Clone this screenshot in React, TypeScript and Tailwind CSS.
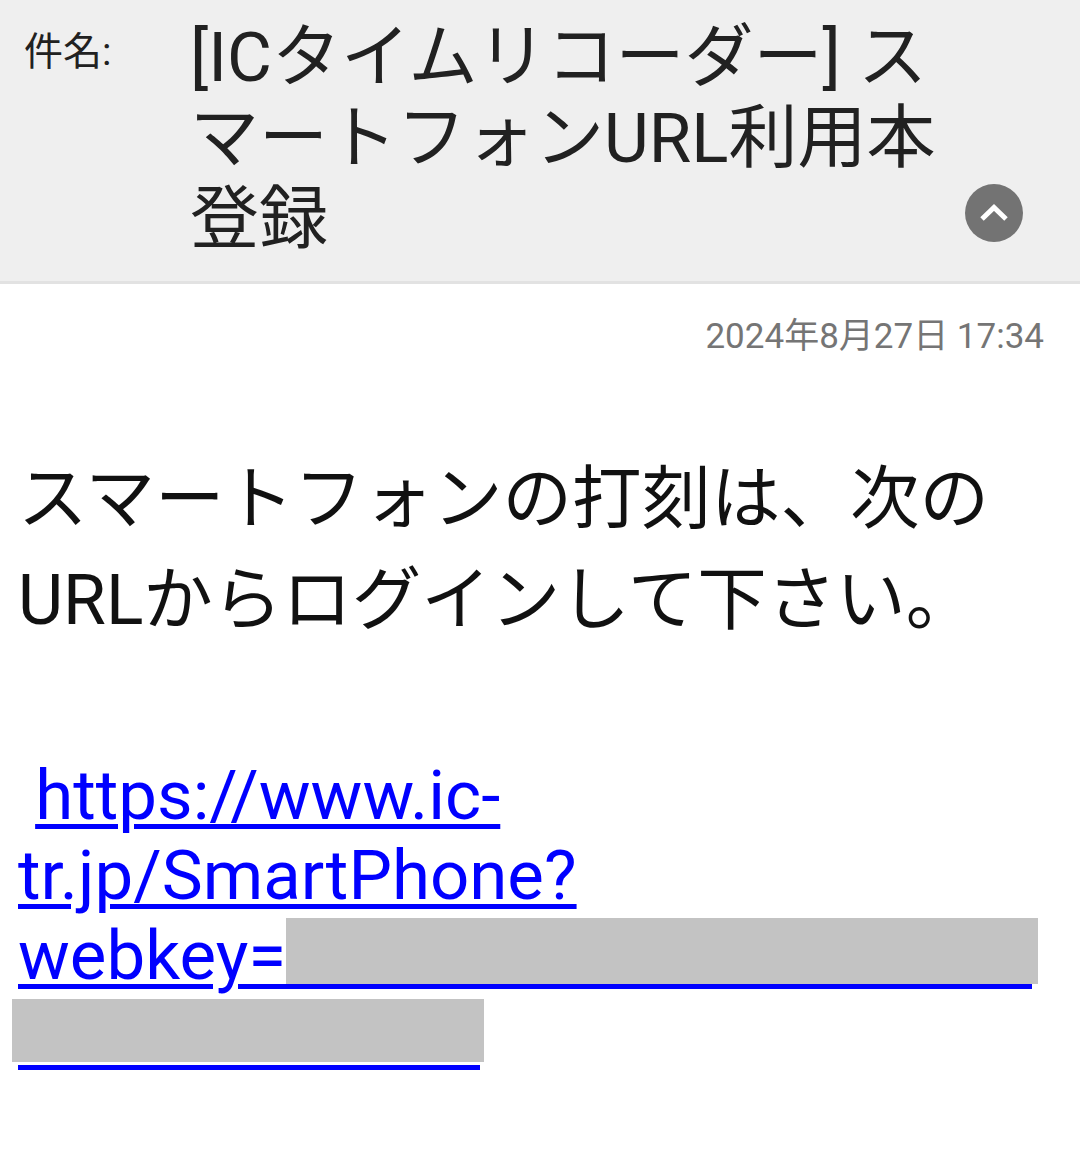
const FONT = "font-['Roboto','Noto_Sans_CJK_JP',sans-serif]";

function CollapseButton() {
  return (
    <button
      type="button"
      className="absolute right-[57px] bottom-[39px] w-[58px] h-[58px] rounded-full bg-[#737373] flex items-center justify-center"
    >
      <svg width="30" height="20" viewBox="0 0 30 20" fill="none">
        <path d="M3 16 L15 4.5 L27 16" stroke="#ffffff" strokeWidth="5" strokeLinejoin="miter" />
      </svg>
    </button>
  );
}

export default function App() {
  return (
    <div className={`${FONT} w-[1080px] min-h-[1171px] bg-white`}>
      {/* subject header */}
      <div className="relative bg-[#efefef] border-b-[3px] border-[#e2e2e2] h-[284px] pl-6 pt-[17px]">
        <div className="flex items-start">
          <div className="w-[166px] shrink-0 pt-[11px] text-[39px] leading-[48px] text-[#212121]">件名:</div>
          <div className="w-[770px] text-[69px] leading-[81px] text-[#212121]">
            [ICタイムリコーダー] スマートフォンURL利用本登録
          </div>
        </div>
        <CollapseButton />
      </div>

      {/* date */}
      <div className="pt-[29px] pr-[36px] text-right text-[35px] leading-[48px] text-[#757575]">
        2024年8月27日 17:34
      </div>

      {/* body */}
      <div className="px-[18px] pt-[88px] text-[69.5px] leading-[101px] text-[#111111]">
        <p>スマートフォンの打刻は、次のURLからログインして下さい。</p>
        <p className="h-[101px]" />
      </div>

      <div className="px-[18px] mt-[4px] text-[69px] leading-[80px]">
        <span>&nbsp;</span>
        <a
          href="#"
          className="text-[#0000ff] underline decoration-[5px] underline-offset-[5px]"
        >
          https://www.ic-
          <br />
          tr.jp/SmartPhone?
          <br />
          webkey=
          <span className="inline-block align-[-10px]">
            <span className="block w-[752px] h-[66px] bg-[#c3c3c3]" />
            <span className="block w-[746px] h-[5px] bg-[#0000ff]" />
          </span>
          <br />
          <span className="inline-block align-[-11px] -ml-[6px]">
            <span className="block w-[472px] h-[63px] bg-[#c3c3c3]" />
            <span className="block mt-[3px] ml-[6px] w-[462px] h-[5px] bg-[#0000ff]" />
          </span>
        </a>
      </div>
    </div>
  );
}
